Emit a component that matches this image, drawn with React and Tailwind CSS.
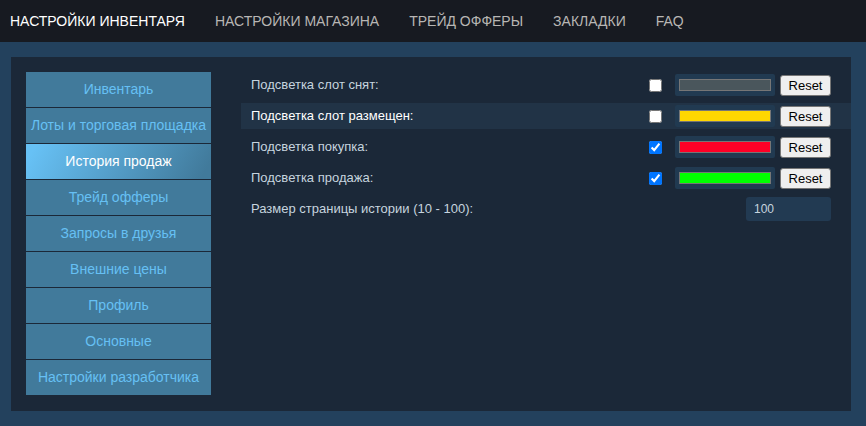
import React, { useState } from 'react';

const tabs = ['Настройки инвентаря', 'Настройки магазина', 'Трейд офферы', 'Закладки', 'FAQ'];

const menu = [
  'Инвентарь',
  'Лоты и торговая площадка',
  'История продаж',
  'Трейд офферы',
  'Запросы в друзья',
  'Внешние цены',
  'Профиль',
  'Основные',
  'Настройки разработчика',
];

const initialColors = [
  { id: 'removed', label: 'Подсветка слот снят:', color: '#4a565c', on: false },
  { id: 'placed', label: 'Подсветка слот размещен:', color: '#ffd700', on: false },
  { id: 'buy', label: 'Подсветка покупка:', color: '#ff0026', on: true },
  { id: 'sell', label: 'Подсветка продажа:', color: '#00ff00', on: true },
];

export default function App() {
  const [activeTab, setActiveTab] = useState(0);
  const [activeMenu, setActiveMenu] = useState(2);
  const [colors, setColors] = useState(initialColors);
  const [pageSize, setPageSize] = useState('100');
  const [hovered, setHovered] = useState('placed');

  const toggle = (id) =>
    setColors(colors.map((c) => (c.id === id ? { ...c, on: !c.on } : c)));

  return (
    <div className="min-h-screen bg-[#23415d] font-['Liberation_Sans',Arial,sans-serif]">
      {/* верхнее меню */}
      <nav className="h-[42px] bg-[#171a21] flex items-center gap-[30px] pl-[10px]">
        {tabs.map((t, i) => (
          <button
            key={t}
            onClick={() => setActiveTab(i)}
            className={`uppercase text-[14px] ${i === activeTab ? 'text-white' : 'text-[#b8b6b4]'}`}
          >
            {t}
          </button>
        ))}
      </nav>

      <div className="pl-[11px] pr-[15px] py-[15px]">
        <div className="bg-[#1b2838] h-[354px] flex pl-[15px] pt-[15px]">
          {/* боковое меню */}
          <div className="w-[185px] flex flex-col gap-px self-start">
            {menu.map((m, i) => (
              <button
                key={m}
                onClick={() => setActiveMenu(i)}
                className={`h-[35px] text-[14px] text-center whitespace-nowrap ${
                  i === activeMenu
                    ? 'text-white bg-[linear-gradient(-60deg,#417a9b_5%,#67c1f5_95%)]'
                    : 'text-[#66c0f4] bg-[#417a9b]'
                }`}
              >
                {m}
              </button>
            ))}
          </div>

          {/* настройки */}
          <div className="flex-1 ml-[30px] flex flex-col gap-[5px] text-[13px]">
            {colors.map((c) => (
              <div
                key={c.id}
                onMouseEnter={() => setHovered(c.id)}
                className={`h-[26px] flex items-center pl-[10px] pr-[20px] ${
                  hovered === c.id ? 'bg-[#213346] text-white' : 'text-[#c6d4df]'
                }`}
              >
                <span className="flex-1">{c.label}</span>
                <input
                  type="checkbox"
                  checked={c.on}
                  onChange={() => toggle(c.id)}
                  className="w-[13px] h-[13px] m-0"
                />
                <div className="ml-[13px] w-[100px] h-[22px] bg-[#213a51] rounded-[2px] px-[4px] py-[5px]">
                  <div className="h-full border border-[#767676]" style={{ background: c.color }} />
                </div>
                <button
                  onClick={() => setColors(colors.map((x) => (x.id === c.id ? { ...x, color: initialColors.find((y) => y.id === c.id).color } : x)))}
                  className="ml-[5px] w-[51px] h-[21px] bg-[#efefef] border border-[#767676] rounded-[3px] text-[13px] text-black leading-none"
                >
                  Reset
                </button>
              </div>
            ))}
            <div className="h-[26px] flex items-center pl-[10px] pr-[20px] text-[#c6d4df]">
              <span className="flex-1">Размер страницы истории (10 - 100):</span>
              <input
                value={pageSize}
                onChange={(e) => setPageSize(e.target.value)}
                className="w-[85px] h-[24px] bg-[#223a52] rounded-[3px] px-[8px] text-[12px] text-[#c6d4df] outline-none"
              />
            </div>
          </div>
        </div>
      </div>
    </div>
  );
}
